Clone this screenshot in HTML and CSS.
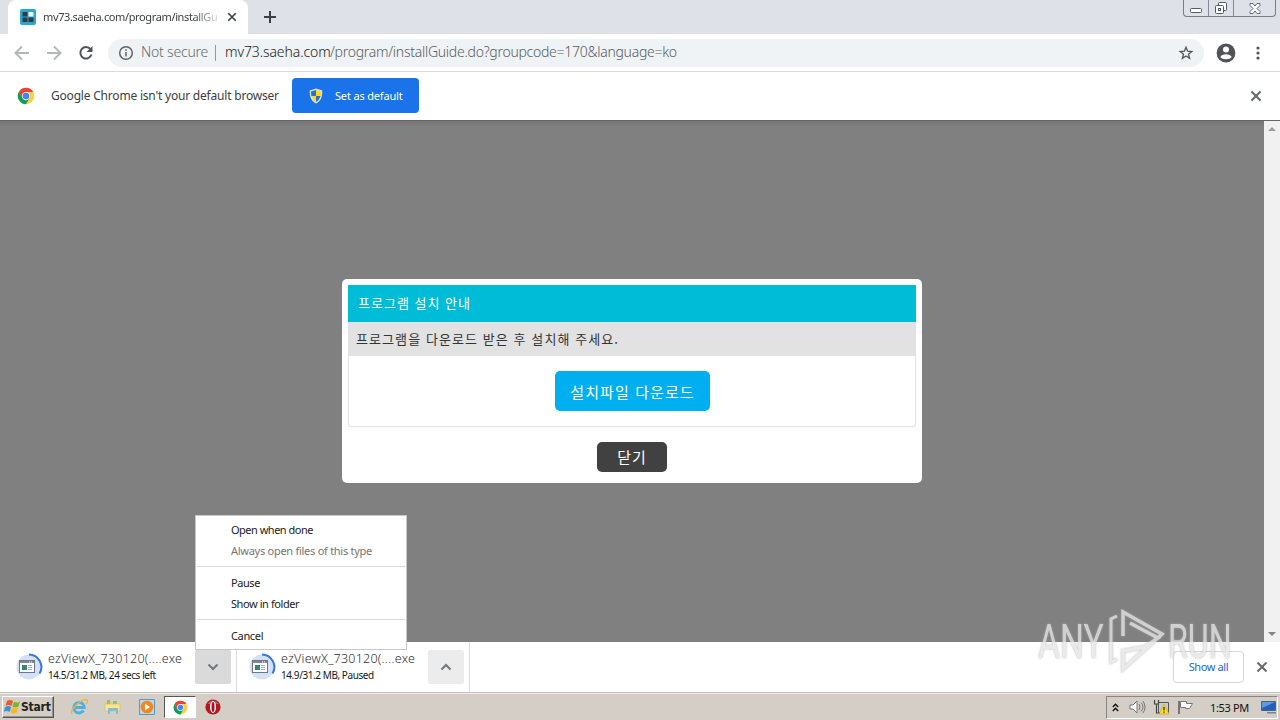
FILE: index.html
```html
<!DOCTYPE html>
<html lang="ko">
<head>
<meta charset="utf-8">
<title>프로그램 설치 안내</title>
<link rel="stylesheet" href="styles.css">
</head>
<body>
<svg class="defs" width="0" height="0">
  <symbol id="chrome" viewBox="0 0 48 48">
    <circle cx="24" cy="24" r="22" fill="#ffcd40"/>
    <path d="M4.950 13A22 22 0 0 0 24 46L33.500 29.500 24 24 14.500 29.500Z" fill="#109d58"/>
    <path d="M4.950 13A22 22 0 0 1 43.050 13L24 13 14.500 29.500Z" fill="#ea4335"/>
    <circle cx="24" cy="24" r="11" fill="#f1f1f1"/><circle cx="24" cy="24" r="8.700" fill="#4285f4"/>
  </symbol>
  <symbol id="cross" viewBox="0 0 12 12"><path d="M1.500 1.500 10.500 10.500M10.500 1.500 1.500 10.500" fill="none" stroke="currentColor" stroke-width="2"/></symbol>
  <symbol id="exe" viewBox="0 0 28 28">
    <circle cx="14" cy="14" r="12.500" fill="#d3e0f6"/>
    <path d="M14 1.500A12.500 12.500 0 0 1 24.500 20.500" fill="none" stroke="#3478e5" stroke-width="2"/>
    <rect x="4.500" y="7.500" width="15" height="12" fill="#fff" stroke="#707780"/>
    <path d="M5 9h14" stroke="#7f8790" stroke-width="2"/><path d="M14 9h1M16 9h1" stroke="#fff"/>
    <rect x="7" y="12" width="5" height="5" fill="#39866b"/><path d="M13 12.500h4M13 14.500h4M13 16.500h4" stroke="#a3acb7"/>
  </symbol>
</svg>
<div class="screen">
  <header class="tabstrip">
    <div class="tab">
      <svg width="16" height="16" viewBox="0 0 16 16"><rect width="16" height="16" rx="2" fill="#2ba9cc"/><path d="M2.500 3h5v4.500h-5zM2.500 8.500h5V13h-5zM8.500 8.500h5V13h-5z" fill="#343943"/><path d="M8.500 3h5v4.500h-5z" fill="#e8f8fc"/></svg>
      <span class="tab-title">mv73.saeha.com/program/installGui</span>
      <svg class="tab-x" width="10" height="10"><use href="#cross"/></svg>
    </div>
    <svg class="newtab" width="12" height="12"><path d="M6 0v12M0 6h12" stroke="#3c4043" stroke-width="2"/></svg>
    <div class="winbtns">
      <span class="wb wb-min"><svg width="13" height="6"><rect x=".5" y=".5" width="11" height="4" rx="1" fill="#fff" stroke="#555b65"/></svg></span>
      <span class="wb wb-max"><svg width="14" height="14" fill="#fff" stroke="#555b65"><rect x="4.500" y="1.500" width="8" height="8" rx="1"/><rect x="1.500" y="4.500" width="8" height="8" rx="1"/><rect x="4.500" y="7.500" width="2" height="2"/></svg></span>
      <span class="wb wb-close"><svg width="12" height="11"><path d="M1 .5h3l2 2.500 2-2.500h3v2L8 5.500l3 3v2H8L6 8l-2 2.500H1v-2l3-3-3-3z" fill="#fff" stroke="#646a73"/></svg></span>
    </div>
  </header>
  <nav class="toolbar">
    <svg class="nav" width="16" height="16" stroke="#b5b7ba"><path d="M15 8H2M8 1.500 1.500 8 8 14.500"/></svg>
    <svg class="nav" width="16" height="16" stroke="#b5b7ba"><path d="M1 8h13M8 1.500 14.500 8 8 14.500"/></svg>
    <svg class="nav reload" width="16" height="16" stroke="#505459"><path d="M12.500 4.200A5.700 5.700 0 1 0 13.500 9.500"/><path d="M14.500 1v6h-6z" fill="#505459" stroke="none"/></svg>
    <div class="omnibox">
      <svg width="16" height="16" viewBox="0 0 16 16"><circle cx="8" cy="8" r="6.300" fill="none" stroke="#5f6368" stroke-width="1.500"/><path d="M8 7v4.500M8 4.300v1.500" stroke="#5f6368" stroke-width="1.500"/></svg>
      <span class="secure">Not secure</span><i class="bar"></i>
      <span class="host">mv73.saeha.com</span><span class="path">/program/installGuide.do?groupcode=170&amp;language=ko</span>
      <svg class="star" width="16" height="16" viewBox="0 0 16 16"><path d="M8 2.300 9.600 6.200l4.200.3-3.300 2.700 1.100 4.100L8 11l-3.600 2.300 1.100-4.100L2.200 6.500l4.200-.3z" fill="none" stroke="#505459" stroke-width="1.300"/></svg>
    </div>
    <svg class="user" width="20" height="20" viewBox="0 0 20 20"><circle cx="10" cy="10" r="9.400" fill="#505459"/><circle cx="10" cy="6.500" r="3" fill="#fff"/><path d="M4.300 14c1.500-3.800 9.900-3.800 11.400 0-2 3-9.400 3-11.400 0z" fill="#fff"/></svg>
    <svg class="dots" width="4" height="14" fill="#505459"><circle cx="2" cy="2" r="1.600"/><circle cx="2" cy="7" r="1.600"/><circle cx="2" cy="12" r="1.600"/></svg>
  </nav>
  <section class="infobar">
    <svg width="18" height="18"><use href="#chrome"/></svg>
    <span class="info-text">Google Chrome isn't your default browser</span>
    <button class="default-btn"><svg width="14" height="16" viewBox="0 0 14 16"><path d="M7 .5 13.300 2.500C13.300 9 12 13 7 15.500 2 13 .7 9 .7 2.500z" fill="#d9e4ed"/><path d="M7 2 2 3.500Q2 6 2.400 8H7z" fill="#2e72c8"/><path d="M7 2l5 1.500Q12 6 11.600 8H7z" fill="#ffd91c"/><path d="M7 8H2.400Q3.500 12 7 14z" fill="#ffd91c"/><path d="M7 8h4.600Q10.500 12 7 14z" fill="#2e72c8"/></svg><span>Set as default</span></button>
    <svg class="info-x" width="12" height="12"><use href="#cross"/></svg>
  </section>
  <main class="content">
    <div class="page">
      <div class="dialog">
        <h1>프로그램 설치 안내</h1>
        <div class="box"><p>프로그램을 다운로드 받은 후 설치해 주세요.</p><div class="download-row"><button class="download">설치파일 다운로드</button></div></div>
        <button class="close">닫기</button>
      </div>
    </div>
    <div class="scroll"><svg width="8" height="4"><path d="M4 0 8 4H0z" fill="#9c9c9c"/></svg><svg width="8" height="4"><path d="M0 0h8L4 4z" fill="#858585"/></svg></div>
  </main>
  <footer class="shelf">
    <div class="item"><svg width="28" height="28"><use href="#exe"/></svg><div class="file"><b>ezViewX_730120(....exe</b><small class="s1">14.5/31.2 MB, 24 secs left</small></div><span class="arrow active"><svg width="12" height="8"><path d="m1.500 1.500 4.500 4.500 4.500-4.500"/></svg></span></div>
    <div class="item second"><svg width="28" height="28"><use href="#exe"/></svg><div class="file"><b>ezViewX_730120(....exe</b><small class="s2">14.9/31.2 MB, Paused</small></div><span class="arrow"><svg width="12" height="8"><path d="M1.500 6.500 6 2l4.500 4.500"/></svg></span></div>
    <button class="show">Show all</button>
    <svg class="shelf-x" width="12" height="12"><use href="#cross"/></svg>
  </footer>
  <div class="taskbar">
    <div class="start"><svg width="17" height="16" viewBox="0 0 17 16"><path d="M3 2q3-2 6 0L7.500 7q-3-2-6 0z" fill="#ed5a28"/><path d="M10 2.500q3 2 6 0l-1.500 5q-3 2-6 0z" fill="#79b82c"/><path d="M1.200 8q3-2 6 0l-1.500 5q-3-2-6 0z" fill="#438ed8"/><path d="M8.200 8.500q3 2 6 0l-1.500 5q-3 2-6 0z" fill="#f9b719"/></svg><b>Start</b></div>
    <svg class="q ie" width="18" height="18" viewBox="0 0 18 18"><path d="M13.500 12.500A5.300 5.300 0 1 1 14.300 9.500H5" fill="none" stroke="#4db0e4" stroke-width="2.800"/><path d="M2 16C-1 12 12 0 17 2c1 1 0 3-1 4" fill="none" stroke="#e8b543" stroke-width="1.300"/></svg>
    <svg class="q folder" width="18" height="18" viewBox="0 0 18 18"><path d="M1 3h5l1 2h9v8H1z" fill="#e8cf70"/><path d="M3 2h3v4H3zM9 3h4v3H9z" fill="#8dbf83"/><path d="M1 6h15v7H1z" fill="#f9e690" stroke="#d9bd62" stroke-width=".7"/><path d="M4 16v-6h10v6h-2v-3H6v3z" fill="#83bddb"/></svg>
    <svg class="q wmp" width="18" height="18" viewBox="0 0 18 18"><path d="M1.500 1.500h15v15h-15z" fill="#bad7ef" stroke="#5e95c7"/><circle cx="9" cy="9" r="6.300" fill="#f18819"/><path d="m7 5.500 5 3.500-5 3.500z" fill="#fff"/></svg>
    <div class="running"><svg width="15" height="15"><use href="#chrome"/></svg></div>
    <svg class="q opera" width="16" height="16" viewBox="0 0 16 16"><circle cx="8" cy="8" r="7.600" fill="#b5171e"/><path d="M2 5q6-7 12 0" fill="#d25558"/><ellipse cx="8" cy="8" rx="3" ry="6" fill="#fff"/><ellipse cx="8" cy="8" rx="1.500" ry="5" fill="#a3131b"/></svg>
    <div class="tray">
      <svg width="7" height="9" fill="none" stroke="#111" stroke-width="1.400"><path d="m.8 4 2.700-2.700L6.200 4M.8 8l2.700-2.700L6.200 8"/></svg>
      <svg class="vol" width="17" height="14" viewBox="0 0 17 14" fill="none" stroke="#777"><path d="M1 5h3l4-4v12L4 9H1z" fill="#fff"/><path d="M10 4q2 3 0 6M12 2.500q4 4.500 0 9M14 1q4 6 0 12"/></svg>
      <svg class="net" width="17" height="15" viewBox="0 0 17 15"><path d="M5.500 2.500h10v10h-10z" fill="#c8cdd1" stroke="#555"/><path d="M1.500 0v4h4V0M3.500 4v9h4" fill="none" stroke="#444" stroke-width="1.200"/><path d="m11 4 5 10H6z" fill="#ffdf2b" stroke="#bd9a12" stroke-width=".6"/><path d="M11 7v3.500M11 11.500v1.200" stroke="#333" stroke-width="1.300"/></svg>
      <svg class="flag" width="17" height="15" viewBox="0 0 17 15"><path d="M2 1v13" stroke="#777" stroke-width="2"/><path d="M3.500 1.500h6v2h6l-3 5h-4v-1h-5z" fill="#fff" stroke="#777"/></svg>
      <span class="clock">1:53 PM</span>
      <svg class="desk" width="16" height="13" viewBox="0 0 16 13"><path d="M.5.500h14v9h-14z" fill="#245fbb" stroke="#4d6277"/><path d="M1 1h13L1 7z" fill="#5b9be4"/><path d="M6 11h9v1.500H6z" fill="#718899"/></svg>
    </div>
  </div>
  <div class="menu"><span class="m1">Open when done</span><span class="m2">Always open files of this type</span><hr><span class="m3">Pause</span><span class="m4">Show in folder</span><hr><span class="m5">Cancel</span></div>
  <div class="watermark"><span>ANY</span><svg width="58" height="64" viewBox="0 0 58 64" fill="none" stroke="currentColor"><path d="M9 7 3 10v43l6-3" stroke-width="3"/><path d="M15 27V3L54 25 15 60V42L37 38 50 29 22 14" stroke-width="3.500"/></svg><span class="run">RUN</span></div>
</div>
</body>
</html>
```
FILE: styles.css
```css
* { box-sizing: border-box; }
body { margin: 0; font: 11px "Noto Sans", "Noto Sans CJK KR", sans-serif; color: #222; }
button { font: inherit; border: 0; padding: 0; }
svg { display: block; flex: none; }
.defs { position: absolute; }
.screen { position: relative; width: 1280px; height: 720px; overflow: hidden; display: flex; flex-direction: column; white-space: nowrap; background: #fff; }
.tabstrip { height: 34px; background: #dee1e8; display: flex; align-items: flex-start; padding-left: 8px; }
.tab { width: 240px; height: 34px; background: #fff; border-radius: 8px 8px 0 0; display: flex; align-items: center; padding-left: 12px; }
.tab-title { width: 175px; margin-left: 7px; font-size: 11px; letter-spacing: -.37px; line-height: 18px; color: #3c4043; -webkit-mask-image: linear-gradient(90deg, #000 150px, transparent 180px); }
.tab-x { margin-left: 9px; color: #3c4043; }
.newtab { margin: 11px 0 0 16px; }
.winbtns { margin-left: auto; margin-right: 4px; width: 93px; height: 17px; border: 1px solid #777d89; border-top: 0; border-radius: 0 0 4px 4px; display: flex; }
.wb { display: flex; justify-content: center; align-items: center; border-right: 1px solid #858b96; }
.wb-min { width: 25px; padding-top: 5px; }
.wb-max { width: 25px; }
.wb-close { flex: 1; border: 0; }
.toolbar { height: 38px; border-bottom: 1px solid #d8dadd; display: flex; align-items: center; padding-left: 14px; }
.nav { fill: none; stroke-width: 2; margin-right: 16px; }
.reload { margin-right: 14px; }
.omnibox { width: 1096px; height: 28px; border-radius: 14px; background: #f0f3f5; display: flex; align-items: center; padding-left: 10px; font-size: 14px; line-height: 26px; }
.omnibox span { margin-top: -2px; }
.omnibox .secure { margin-left: 7px; width: 68px; color: #65696e; letter-spacing: -.2px; font-weight: 300; }
.bar { width: 1px; height: 16px; background: #94989c; margin: 0 9px 0 6px; }
.host { width: 105px; color: #202124; font-weight: 300; letter-spacing: -.1px; }
.path { color: #585c61; font-weight: 300; letter-spacing: -.27px; }
.star { margin-left: auto; margin-right: 10px; }
.user { margin-left: 12px; }
.dots { margin-left: 20px; }
.infobar { height: 49px; border-bottom: 1px solid #646464; display: flex; align-items: center; padding-left: 17px; }
.info-text { margin-left: 16px; margin-top: -2px; width: 241px; font-size: 12px; letter-spacing: -.2px; color: #3b3e42; }
.default-btn { width: 127px; height: 35px; margin-top: -1px; border-radius: 4px; background: #1a73e8; color: #fff; display: flex; align-items: center; padding-left: 17px; letter-spacing: -.17px; }
.default-btn span { margin-left: 12px; margin-top: -1px; }
.info-x { margin-left: auto; margin-right: 18px; color: #616569; }
.content { height: 521px; display: flex; }
.page { flex: 1; background: linear-gradient(#757575, #808080 5px); padding: 158px 0 0 342px; }
.dialog { width: 580px; height: 204px; border-radius: 5px; background: #fff; padding: 6px; display: flex; flex-direction: column; font-family: "Noto Sans CJK KR", sans-serif; }
h1 { margin: 0; height: 37px; background: #00bcd7; color: #fff; font-size: 13px; font-weight: 400; letter-spacing: 1px; line-height: 36px; padding-left: 10px; }
.box { height: 105px; border: 1px solid #dfe1e2; border-top: 0; border-radius: 0 0 3px 3px; }
.box p { margin: 0; height: 34px; line-height: 34px; background: #e2e2e2; color: #333; padding-left: 7px; font-size: 13px; font-weight: 400; letter-spacing: 1.08px; }
.download-row { padding-top: 15px; }
.download { display: block; width: 155px; height: 40px; margin: 0 auto; border-radius: 5px; background: #00aff0; color: #fff; font-size: 15px; letter-spacing: 1.1px; padding-left: 1px; }
.close { width: 70px; height: 30px; margin: 15px auto 0; border-radius: 5px; background: #414141; color: #fff; font-size: 15px; font-weight: 400; letter-spacing: 1px; padding-bottom: 1px; }
.scroll { width: 16px; background: #f1f1f1; display: flex; flex-direction: column; justify-content: space-between; align-items: center; padding: 6px 0; }
.shelf { height: 51px; border-bottom: 1px solid #c4c4c4; display: flex; }
.item { width: 237px; border-right: 1px solid #dadce0; display: flex; padding: 8px 5px 0 15px; }
.item > svg { margin-top: 3px; }
.second { width: 233px; padding-left: 11px; }
.file { width: 147px; margin-left: 5px; display: flex; flex-direction: column; }
.file b { font-size: 12.5px; font-weight: 300; line-height: 17px; letter-spacing: .24px; color: #303030; }
.file small { font-size: 10px; line-height: 17px; letter-spacing: -.42px; color: #161616; }
.arrow { width: 36px; height: 34px; margin-left: auto; background: #ececec; border-radius: 2px; display: flex; align-items: center; justify-content: center; }
.active { background: #dadada; }
.arrow path { fill: none; stroke: #73777b; stroke-width: 2; }
.show { margin: 9px 0 0 703px; width: 71px; height: 32px; background: #fff; border: 1px solid #d5d7da; border-radius: 4px; color: #1b68ce; letter-spacing: -.38px; padding-bottom: 1px; }
.shelf-x { margin: 19px 0 0 12px; color: #65696d; }
.taskbar { height: 27px; background: #d5cec6; border-top: 1px solid #efebe5; display: flex; align-items: center; padding-left: 2px; }
.start { width: 52px; height: 22px; display: flex; align-items: center; background: #d5cec6; border: 1px solid; border-color: #fff #555 #555 #fff; box-shadow: inset -1px -1px #96918b; padding-left: 1px; }
.start b { font: bold 12px "DejaVu Sans Condensed", "Open Sans", sans-serif; letter-spacing: -.2px; }
.ie { margin-left: 16px; }
.folder { margin-left: 16px; }
.wmp { margin-left: 16px; }
.running { width: 32px; height: 22px; margin-left: 8px; background: #fff; border: 1px solid; border-color: #555 #fff #fff #555; display: grid; place-items: center; }
.opera { margin-left: 9px; }
.tray { width: 172px; height: 23px; margin-left: auto; margin-right: 2px; border: 1px solid; border-color: #898580 #fff #fff #89857f; display: flex; align-items: center; padding-left: 5px; }
.vol { margin-left: 10px; }
.net { margin-left: 7px; }
.flag { margin-left: 7px; }
.clock { margin-left: 16px; width: 51px; color: #111; letter-spacing: -.35px; }
.menu { position: absolute; left: 195px; top: 515px; width: 212px; height: 135px; background: #fff; border: 1px solid #c8c8c8; padding-top: 3px; display: flex; flex-direction: column; }
.menu span { height: 21px; line-height: 21px; padding-left: 35px; }
.menu hr { width: 208px; margin: 5px 1px; border: 0; border-top: 1px solid #d8d8d8; flex: none; }
.menu .m1 { letter-spacing: -.5px; }
.menu .m2 { color: #747474; letter-spacing: -.27px; }
.menu .m3, .menu .m4 { letter-spacing: -.42px; }
.menu .m5 { letter-spacing: -.35px; }
.watermark { position: absolute; left: 1038px; top: 609px; width: 200px; height: 64px; display: flex; align-items: center; color: #e5e5e5; opacity: .8; filter: drop-shadow(0 0 1px #aaa); font-family: Roboto, sans-serif; font-size: 48px; }
.watermark span { width: 66px; transform: scaleX(.7); transform-origin: left; }
.watermark svg { margin-left: 4px; }
.watermark .run { margin-left: 2px; transform: scaleX(.67); }
```
